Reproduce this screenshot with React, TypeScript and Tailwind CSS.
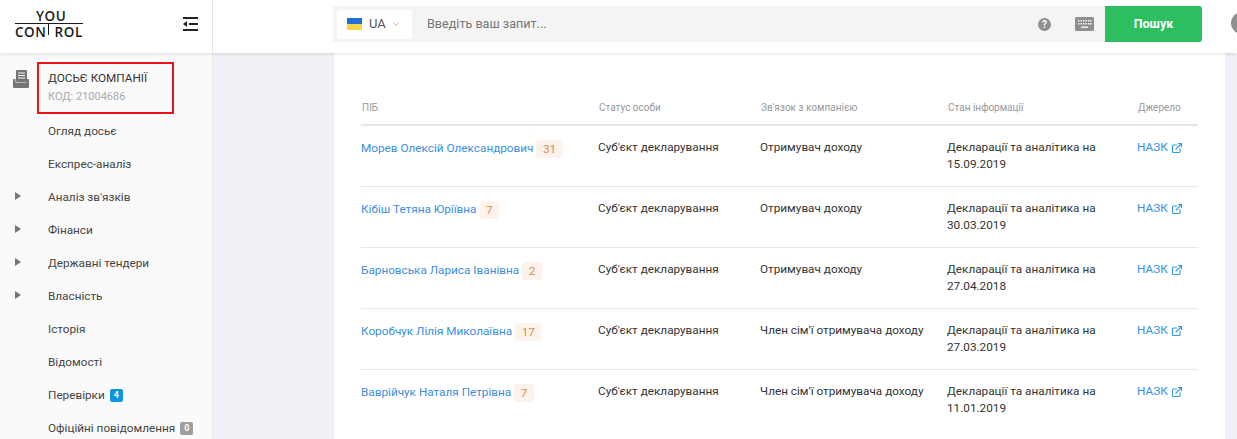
import { ChevronDown, ExternalLink } from 'lucide-react';

const ROWS = [
  { name: 'Морев Олексій Олександрович', count: 31, link: 'Отримувач доходу', date: '15.09.2019' },
  { name: 'Кібіш Тетяна Юріївна', count: 7, link: 'Отримувач доходу', date: '30.03.2019' },
  { name: 'Барновська Лариса Іванівна', count: 2, link: 'Отримувач доходу', date: '27.04.2018' },
  { name: 'Коробчук Лілія Миколаївна', count: 17, link: 'Член сім\'ї отримувача доходу', date: '27.03.2019' },
  { name: 'Ваврійчук Наталя Петрівна', count: 7, link: 'Член сім\'ї отримувача доходу', date: '11.01.2019' },
];

const NAV = [
  { label: 'Огляд досьє' },
  { label: 'Експрес-аналіз' },
  { label: 'Аналіз зв\'язків', arrow: true },
  { label: 'Фінанси', arrow: true },
  { label: 'Державні тендери', arrow: true },
  { label: 'Власність', arrow: true },
  { label: 'Історія' },
  { label: 'Відомості' },
  { label: 'Перевірки', badge: '4', badgeClass: 'bg-[#0d95e0]' },
  { label: 'Офіційні повідомлення', badge: '0', badgeClass: 'bg-[#9e9e9e]' },
];

function Logo() {
  return (
    <div className="relative w-[68px] text-[#1a1a1a] font-['Open_Sans',sans-serif] font-semibold text-[13.5px] leading-[12px]">
      <div className="pl-[21px] tracking-[0.6px]">YOU</div>
      <div className="h-[1px] bg-[#1a1a1a] mt-[1px]" />
      <div className="mt-[2px] tracking-[0.55px] whitespace-nowrap">
        CON<span className="text-transparent">T</span>ROL
      </div>
      {/* stem of the T hangs from the line */}
      <div className="absolute left-[33px] top-[13px] h-[12px] w-[1px] bg-[#1a1a1a]" />
    </div>
  );
}

function CollapseIcon() {
  return (
    <svg width="15" height="14" viewBox="0 0 15 14" fill="none">
      <path d="M0 1h15M6 7h9M0 13h15" stroke="#222" strokeWidth="2" />
      <path d="M0 7 4 4v6z" fill="#222" />
    </svg>
  );
}

function DossierIcon() {
  return (
    <svg width="16" height="18" viewBox="0 0 16 18">
      <rect x="3" y="0" width="11" height="12" rx="1" fill="#757575" />
      <path d="M5 2.5h7v1H5zM5 5h7v1H5zM5 7.5h7v1H5z" fill="#fafafa" />
      <path d="M0 10a1 1 0 0 1 1-1h1.5v3.5h11V9H15a1 1 0 0 1 1 1v7a1 1 0 0 1-1 1H1a1 1 0 0 1-1-1z" fill="#757575" />
    </svg>
  );
}

function KeyboardIcon() {
  return (
    <svg width="19" height="14" viewBox="0 0 19 14">
      <rect width="19" height="14" rx="1.5" fill="#8f8f8f" />
      <path d="M3 3h1.5v1.5H3zM5.5 3H7v1.5H5.5zM8 3h1.5v1.5H8zM10.5 3H12v1.5h-1.5zM13 3h1.5v1.5H13zM15 3h1.5v1.5H15zM3 6h1.5v1.5H3zM5.5 6H7v1.5H5.5zM8 6h1.5v1.5H8zM10.5 6H12v1.5h-1.5zM13 6h1.5v1.5H13zM15 6h1.5v1.5H15zM6 9.5h7V11H6z" fill="#f4f4f4" />
    </svg>
  );
}

export default function App() {
  return (
    <div className="w-[1237px] h-[439px] overflow-hidden bg-[#eff1f6] flex flex-col font-['Roboto',sans-serif] text-[11.75px]">
      {/* Top bar */}
      <header className="relative z-10 h-[53px] shrink-0 bg-white flex shadow-[0_1px_4px_rgba(0,0,0,0.12)]">
        <div className="w-[213px] shrink-0 border-r border-[#e6e6e6] flex items-center justify-between pl-[15px] pr-[14px] pb-[5px]">
          <Logo />
          <CollapseIcon />
        </div>
        <div className="flex-1 flex items-start pl-[120px] pt-[6px] min-w-0">
          <div className="w-[772px] shrink-0 h-[36px] bg-[#f4f4f4] rounded-l-[3px] flex items-center pl-[4px] pr-[11px]">
            <div className="w-[75px] h-[29px] bg-white rounded-[3px] flex items-center pl-[10px]">
              <div className="w-[15px] h-[12px] flex flex-col">
                <div className="h-1/2 bg-[#1f6fd6]" />
                <div className="h-1/2 bg-[#fbd44a]" />
              </div>
              <span className="ml-[7px] text-[13px] text-[#555]">UA</span>
              <ChevronDown size={10} className="ml-[5px] text-[#aaa]" />
            </div>
            <span className="ml-[15px] text-[12.6px] text-[#777]">Введіть ваш запит...</span>
            <div className="ml-auto w-[13px] h-[13px] rounded-full bg-[#8f8f8f] text-white text-[10px] font-bold leading-[13px] text-center">?</div>
            <div className="ml-[24px] flex"><KeyboardIcon /></div>
          </div>
          <div className="w-[97px] shrink-0 h-[36px] bg-[#2dbe60] rounded-r-[3px] text-white text-[12.5px] font-bold flex items-center justify-center">Пошук</div>
          <div className="ml-[29px] mt-[6px] w-[22px] h-[22px] rounded-full bg-[#8f8f8f] shrink-0" />
        </div>
      </header>

      <div className="flex-1 flex min-h-0">
        {/* Sidebar */}
        <aside className="w-[213px] shrink-0 bg-[#fafafa] border-r border-[#ececec] pt-[9px]">
          <div className="flex items-start pl-[13px]">
            <div className="w-[24px] pt-[8px] flex"><DossierIcon /></div>
            <div className="w-[137px] h-[52px] border-2 border-[#ec1118] pl-[9px] pt-[5px]">
              <div className="text-[#333] leading-[18px]">ДОСЬЄ КОМПАНІЇ</div>
              <div className="text-[#aaa] text-[11px] leading-[18px] mt-[1px]">КОД: 21004686</div>
            </div>
          </div>
          <nav className="pt-[1px]">
            {NAV.map((item) => (
              <div key={item.label} className="relative h-[33px] flex items-center pl-[48px] text-[#444]">
                {item.arrow && (
                  <span className="absolute left-[15px] top-[11px] w-0 h-0 border-y-[4px] border-y-transparent border-l-[6px] border-l-[#757575]" />
                )}
                <span>{item.label}</span>
                {item.badge && (
                  <span className={`ml-[5px] w-[13px] h-[13px] rounded-[2px] text-white text-[9px] font-bold leading-[13px] text-center ${item.badgeClass}`}>
                    {item.badge}
                  </span>
                )}
              </div>
            ))}
          </nav>
        </aside>

        {/* Content */}
        <main className="flex-1 min-w-0 pl-[121px] pr-[12px]">
          <div className="h-full bg-white pl-[27px] pr-[27px] pt-[47px] overflow-hidden">
            <div className="grid grid-cols-[237px_162px_187px_190px_1fr] h-[26px] border-b-2 border-[#e5e5e5] text-[#999] text-[10px] leading-[16px]">
              <div className="pl-[1px]">ПІБ</div>
              <div className="pl-[1px]">Статус особи</div>
              <div className="pl-[1px]">Зв'язок з компанією</div>
              <div className="pl-[1px]">Стан інформації</div>
              <div className="pl-[1px]">Джерело</div>
            </div>
            {ROWS.map((row, i) => (
              <div
                key={row.date}
                className={`grid grid-cols-[237px_162px_187px_190px_1fr] h-[61px] pt-[13px] text-[#333] leading-[17px] ${i < ROWS.length - 1 ? 'border-b border-[#e8e8e8]' : ''}`}
              >
                <div className="flex items-start pt-[1px]">
                  <a className="text-[#3b8ee0]">{row.name}</a>
                  <span className="ml-[3px] h-[18px] px-[6.5px] rounded-[3px] bg-[#fdf3ec] text-[#e08a45] leading-[18px]">{row.count}</span>
                </div>
                <div>Суб'єкт декларування</div>
                <div>{row.link}</div>
                <div>
                  Декларації та аналітика на
                  <br />
                  {row.date}
                </div>
                <div className="flex items-start text-[#3b8ee0]">
                  НАЗК
                  <ExternalLink size={12} strokeWidth={2.25} className="ml-[3px] mt-[3px] text-[#2f9be6]" />
                </div>
              </div>
            ))}
          </div>
        </main>
      </div>
    </div>
  );
}
